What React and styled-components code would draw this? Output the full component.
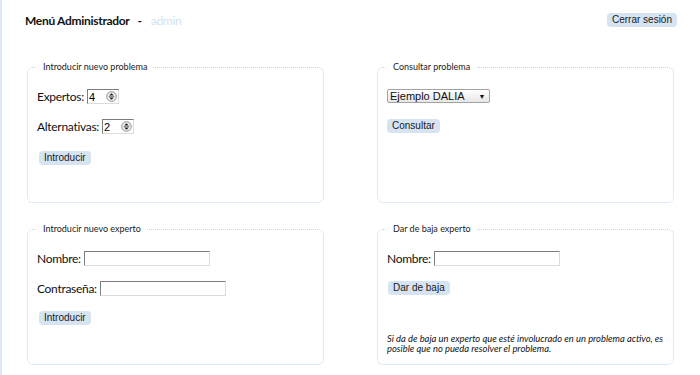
import React from 'react';
import styled, { createGlobalStyle } from 'styled-components';

const Global = createGlobalStyle`
	body {
		margin: 0;
		background: #fff;
		font-family: Lato, 'Open Sans', sans-serif;
	}
`;

const Page = styled.div`
	min-height: 375px;
	box-sizing: border-box;
	border-left: 2px solid #dde8f4;
`;

const Header = styled.header`
	display: flex;
	justify-content: space-between;
	align-items: center;
	height: 14px;
	padding: 13px 23px 0 23px;
	.title {
		font-size: 12px;
		font-weight: bold;
		color: #111;
		letter-spacing: -0.3px;
	}
	.sep {
		margin: 0 9px 0 8px;
	}
	.user {
		font-weight: normal;
		color: #d3e1f0;
	}
`;

const Button = styled.button`
	height: 14px;
	padding: 0 5px;
	border: none;
	border-radius: 4px;
	background: #d6e3f1;
	color: #1a1a1a;
	font-family: 'Liberation Sans', Arial, sans-serif;
	font-size: 10px;
	line-height: 14px;
	cursor: pointer;
`;

const Grid = styled.main`
	display: grid;
	grid-template-columns: 297px 297px;
	column-gap: 53px;
	row-gap: 20px;
	margin-top: 34px;
	padding-left: 25px;
`;

const Box = styled.fieldset`
	box-sizing: border-box;
	height: 142px;
	margin: 0;
	padding: 0 9px;
	border: 1px dotted #c3d5ea;
	border-radius: 6px;
	legend {
		padding: 0 6px;
		font-size: 9px;
		line-height: 12px;
		color: #222;
	}
`;

const Body = styled.div`
	display: flex;
	flex-direction: column;
	align-items: flex-start;
	gap: ${(p) => p.$gap || 15}px;
	padding-top: 16px;
`;

const Row = styled.label`
	display: flex;
	align-items: center;
	gap: 3px;
	height: 15px;
	font-size: 12px;
	letter-spacing: -0.3px;
	color: #111;
`;

const TextBox = styled.input`
	box-sizing: border-box;
	width: 126px;
	height: 15px;
	margin: 0;
	padding: 0 2px;
	border: 1px solid;
	border-color: #7d7d7d #dcdcdc #dcdcdc #7d7d7d;
	font-family: 'Liberation Sans', Arial, sans-serif;
	font-size: 11px;
	outline: none;
`;

const NumberBox = styled.span`
	display: inline-flex;
	align-items: center;
	box-sizing: border-box;
	width: 32px;
	height: 15px;
	border: 1px solid;
	border-color: #7d7d7d #dcdcdc #dcdcdc #7d7d7d;
	input {
		width: 17px;
		border: none;
		padding: 0 0 0 1px;
		font-family: 'Liberation Sans', Arial, sans-serif;
		font-size: 11px;
		outline: none;
	}
`;

const SelectBox = styled.span`
	display: inline-flex;
	align-items: center;
	box-sizing: border-box;
	width: 103px;
	height: 14px;
	border: 1px solid #a3a3a3;
	border-radius: 2px;
	background: linear-gradient(#ffffff, #e6e6e6);
	select {
		flex: 1;
		appearance: none;
		border: none;
		background: transparent;
		padding: 0 0 0 2px;
		font-family: 'Liberation Sans', Arial, sans-serif;
		font-size: 11px;
		color: #111;
		outline: none;
	}
	.arrow {
		width: 14px;
		font-size: 7px;
		color: #111;
		text-align: center;
		pointer-events: none;
	}
`;

const Note = styled.p`
	margin: 39px 0 0;
	font-size: 9.4px;
	line-height: 10px;
	font-style: italic;
	color: #111;
`;

const Spinner = () => (
	<svg width="11" height="11" viewBox="0 0 11 11">
		<circle cx="5.5" cy="5.5" r="4.8" fill="#f2f2f2" stroke="#8c8c8c" strokeWidth="1" />
		<path d="M3.1 4.6 L5.5 2.2 L7.9 4.6 Z" fill="#222" />
		<path d="M3.1 6.4 L5.5 8.8 L7.9 6.4 Z" fill="#222" />
		<line x1="2.5" y1="5.5" x2="8.5" y2="5.5" stroke="#666" strokeWidth="0.7" />
	</svg>
);

const NumberField = ({ value }) => (
	<NumberBox>
		<input type="text" defaultValue={value} />
		<Spinner />
	</NumberBox>
);

export default function App() {
	return (
		<Page>
			<Global />
			<Header>
				<span className="title">
					Menú Administrador<span className="sep">-</span>
					<span className="user">admin</span>
				</span>
				<Button>Cerrar sesión</Button>
			</Header>
			<Grid>
				<Box>
					<legend>Introducir nuevo problema</legend>
					<Body>
						<Row>
							Expertos: <NumberField value="4" />
						</Row>
						<Row>
							Alternativas: <NumberField value="2" />
						</Row>
						<Button style={{ marginLeft: 2, marginTop: 2 }}>Introducir</Button>
					</Body>
				</Box>
				<Box>
					<legend>Consultar problema</legend>
					<Body $gap={16}>
						<SelectBox>
							<select defaultValue="dalia">
								<option value="dalia">Ejemplo DALIA</option>
							</select>
							<span className="arrow">▼</span>
						</SelectBox>
						<Button>Consultar</Button>
					</Body>
				</Box>
				<Box>
					<legend>Introducir nuevo experto</legend>
					<Body>
						<Row>
							Nombre: <TextBox type="text" />
						</Row>
						<Row>
							Contraseña: <TextBox type="password" />
						</Row>
						<Button style={{ marginLeft: 2 }}>Introducir</Button>
					</Body>
				</Box>
				<Box>
					<legend>Dar de baja experto</legend>
					<Body>
						<Row>
							Nombre: <TextBox type="text" />
						</Row>
						<Button style={{ marginLeft: 1 }}>Dar de baja</Button>
					</Body>
					<Note>
						Si da de baja un experto que esté involucrado en un problema activo, es
						posible que no pueda resolver el problema.
					</Note>
				</Box>
			</Grid>
		</Page>
	);
}
